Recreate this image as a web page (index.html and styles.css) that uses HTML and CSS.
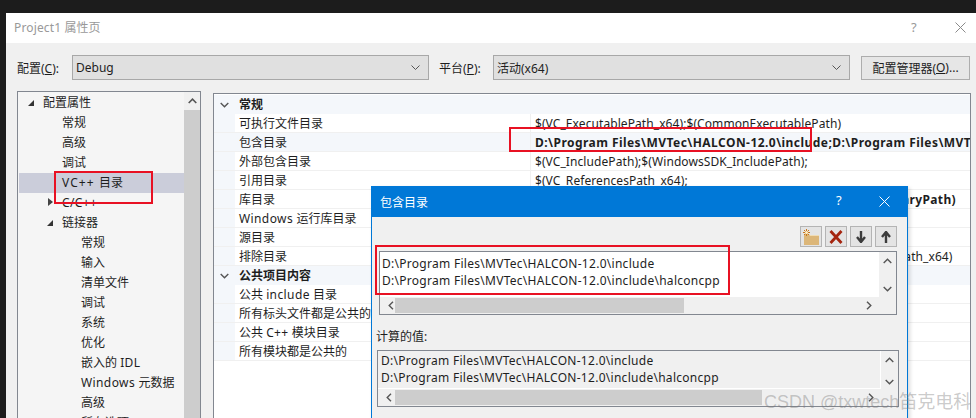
FILE: index.html
```html
<!DOCTYPE html>
<html lang="zh-CN">
<head>
<meta charset="utf-8">
<title>Project1 属性页</title>
<link rel="stylesheet" href="styles.css">
</head>
<body>
<div class="screen">
<div class="window">
  <div class="titlebar">
    <span class="title"><span class="en-title">Project1</span> 属性页</span>
    <span class="help">?</span>
    <svg class="close" width="11" height="11" viewBox="0 0 11 11"><path d="M.5.5l10 10M10.500.5l-10 10" stroke="#8a8a8a" fill="none"/></svg>
  </div>
  <div class="config">
    <label class="lbl lbl-cfg">配置(<u>C</u>):</label>
    <div class="select sel-cfg"><span>Debug</span><svg width="9" height="5" viewBox="0 0 9 5"><path d="M.5.5l4 4 4-4" stroke="#555" fill="none"/></svg></div>
    <label class="lbl lbl-plat">平台(<u>P</u>):</label>
    <div class="select sel-plat"><span>活动(x64)</span><svg width="9" height="5" viewBox="0 0 9 5"><path d="M.5.5l4 4 4-4" stroke="#555" fill="none"/></svg></div>
    <div class="mgr">配置管理器(<u>O</u>)...</div>
  </div>
  <div class="panels">
    <div class="tree">
      <div class="tree-list">
        <div class="node l0"><i class="tri"></i>配置属性</div>
        <div class="node l1">常规</div>
        <div class="node l1">高级</div>
        <div class="node l1">调试</div>
        <div class="node l1 sel"><span class="en-vc">VC++ </span>目录</div>
        <div class="node l1"><i class="tri-open"></i><span class="en">C/C++</span></div>
        <div class="node l1"><i class="tri"></i>链接器</div>
        <div class="node l2">常规</div>
        <div class="node l2">输入</div>
        <div class="node l2">清单文件</div>
        <div class="node l2">调试</div>
        <div class="node l2">系统</div>
        <div class="node l2">优化</div>
        <div class="node l2"><span>嵌入的 </span><span class="en">IDL</span></div>
        <div class="node l2"><span class="en">Windows </span>元数据</div>
        <div class="node l2">高级</div>
        <div class="node l2">所有选项</div>
      </div>
      <div class="tree-scroll">
        <div class="tree-up"><svg width="9" height="6" viewBox="0 0 9 6"><path d="M.7 5l3.800-3.800L8.300 5" stroke="#555" stroke-width="1.600" fill="none"/></svg></div>
        <div class="tree-thumb"></div>
      </div>
    </div>
    <div class="grid">
      <div class="row head"><div class="gut"><svg width="9" height="6" viewBox="0 0 9 6"><path d="M.7 1l3.800 3.800L8.300 1" stroke="#555" stroke-width="1.400" fill="none"/></svg></div><div class="head-name">常规</div></div>
      <div class="row"><div class="gut"></div><div class="name">可执行文件目录</div><div class="val">$(VC_ExecutablePath_x64);$(CommonExecutablePath)</div></div>
      <div class="row alt"><div class="gut"></div><div class="name">包含目录</div><div class="val strong">D:\Program Files\MVTec\HALCON-12.0\include;D:\Program Files\MVTec\HALCON-12.0\include\halconcpp</div></div>
      <div class="row"><div class="gut"></div><div class="name">外部包含目录</div><div class="val">$(VC_IncludePath);$(WindowsSDK_IncludePath);</div></div>
      <div class="row"><div class="gut"></div><div class="name">引用目录</div><div class="val">$(VC_ReferencesPath_x64);</div></div>
      <div class="row"><div class="gut"></div><div class="name">库目录</div><div class="val strong lib">D:\Program Files\MVTec\HALCON-12.0\lib\x64-win64;$(LibraryPath)</div></div>
      <div class="row"><div class="gut"></div><div class="name"><span class="en">Windows </span>运行库目录</div><div class="val">$(WindowsSDK_MetadataPath);</div></div>
      <div class="row"><div class="gut"></div><div class="name">源目录</div><div class="val">$(VC_SourcePath);</div></div>
      <div class="row"><div class="gut"></div><div class="name">排除目录</div><div class="val">$(CommonExcludePath);$(VC_ExecutablePath_x64);$(VC_LibraryPath_x64)</div></div>
      <div class="row head"><div class="gut"><svg width="9" height="6" viewBox="0 0 9 6"><path d="M.7 1l3.800 3.800L8.300 1" stroke="#555" stroke-width="1.400" fill="none"/></svg></div><div class="head-name">公共项目内容</div></div>
      <div class="row"><div class="gut"></div><div class="name">公共 <span class="en">include</span> 目录</div><div class="val"></div></div>
      <div class="row"><div class="gut"></div><div class="name">所有标头文件都是公共的</div><div class="val"></div></div>
      <div class="row"><div class="gut"></div><div class="name">公共 <span class="en">C++</span> 模块目录</div><div class="val"></div></div>
      <div class="row"><div class="gut"></div><div class="name">所有模块都是公共的</div><div class="val"></div></div>
    </div>
  </div>

  <div class="dialog">
    <div class="dlg-title">
      <span class="dlg-name">包含目录</span>
      <span class="dlg-help">?</span>
      <svg class="dlg-close" width="11" height="11" viewBox="0 0 11 11"><path d="M.5.5l10 10M10.500.5l-10 10" stroke="#fff" fill="none"/></svg>
    </div>
    <div class="dlg-tools">
      <div class="tool"><svg width="18" height="16" viewBox="0 0 18 16"><path d="M2 5h5l1 2h9v9H2z" fill="#dcb678"/><path d="M8 6.500h9" stroke="#f0dcb4"/><path d="M4.500 0v7M1 3.500h7M2 1l5 5M7 1L2 6" stroke="#c9751a"/><circle cx="4.500" cy="3.500" r="1.500" fill="#fff3c8"/></svg></div>
      <div class="tool"><svg width="14" height="14" viewBox="0 0 14 14"><path d="M1.500 1l11 12M12.500 1l-11 12" stroke="#a5250f" stroke-width="2.800" fill="none"/></svg></div>
      <div class="tool"><svg width="10" height="12" viewBox="0 0 10 12"><path d="M5 0v10M1 6l4 5 4-5" stroke="#3c3c3c" stroke-width="2.400" fill="none"/></svg></div>
      <div class="tool"><svg width="10" height="12" viewBox="0 0 10 12"><path d="M5 12V2M1 6l4-5 4 5" stroke="#3c3c3c" stroke-width="2.400" fill="none"/></svg></div>
    </div>
    <div class="list list-edit">
      <div class="list-main">
        <div class="list-text">
          <div>D:\Program Files\MVTec\HALCON-12.0\include</div>
          <div>D:\Program Files\MVTec\HALCON-12.0\include\halconcpp</div>
        </div>
        <div class="vbar"><svg width="9" height="6" viewBox="0 0 9 6"><path d="M.7 5l3.800-3.800L8.300 5" stroke="#555" stroke-width="1.400" fill="none"/></svg><svg width="9" height="6" viewBox="0 0 9 6"><path d="M.7 1l3.800 3.800L8.300 1" stroke="#555" stroke-width="1.400" fill="none"/></svg></div>
      </div>
      <div class="hbar">
        <svg width="6" height="9" viewBox="0 0 6 9"><path d="M5 .7L1.200 4.500 5 8.300" stroke="#555" stroke-width="1.400" fill="none"/></svg>
        <div class="hthumb th-edit"></div>
        <svg class="right-arrow" width="6" height="9" viewBox="0 0 6 9"><path d="M1 .7l3.800 3.800L1 8.300" stroke="#555" stroke-width="1.400" fill="none"/></svg>
      </div>
    </div>
    <div class="calc-label">计算的值:</div>
    <div class="list list-calc">
      <div class="list-main">
        <div class="list-text">
          <div>D:\Program Files\MVTec\HALCON-12.0\include</div>
          <div>D:\Program Files\MVTec\HALCON-12.0\include\halconcpp</div>
        </div>
        <div class="vbar"><svg width="9" height="6" viewBox="0 0 9 6"><path d="M.7 5l3.800-3.800L8.300 5" stroke="#555" stroke-width="1.400" fill="none"/></svg><svg width="9" height="6" viewBox="0 0 9 6"><path d="M.7 1l3.800 3.800L8.300 1" stroke="#555" stroke-width="1.400" fill="none"/></svg></div>
      </div>
      <div class="hbar">
        <svg width="6" height="9" viewBox="0 0 6 9"><path d="M5 .7L1.200 4.500 5 8.300" stroke="#555" stroke-width="1.400" fill="none"/></svg>
        <div class="hthumb th-calc"></div>
        <svg class="right-arrow" width="6" height="9" viewBox="0 0 6 9"><path d="M1 .7l3.800 3.800L1 8.300" stroke="#555" stroke-width="1.400" fill="none"/></svg>
      </div>
    </div>
  </div>

  <div class="redbox rb-tree"></div>
  <div class="redbox rb-val"></div>
  <div class="redbox rb-list"></div>
  <div class="watermark">CSDN @txwtech笛克电科</div>
</div>
</div>
</body>
</html>
```

FILE: styles.css
```css
* { box-sizing: border-box; }
html, body { margin: 0; padding: 0; }
body {
  width: 976px; height: 418px; overflow: hidden;
  font-family: "Noto Sans", "Noto Sans CJK SC", sans-serif;
  font-size: 12px; color: #1e1e1e;
}
.en { letter-spacing: .4px; }
.en-vc { letter-spacing: 1.1px; }
.en-title { letter-spacing: .15px; }
.screen { height: 418px; background: #1c1c1c; padding: 13px 0 0 6px; overflow: hidden; }
.window { position: relative; height: 405px; background: #f0f0f0; overflow: hidden; }

.titlebar { height: 30px; background: #fff; display: flex; align-items: center; padding: 0 0 2px 8px; }
.title { font-size: 12px; color: #999; }
.help { position: absolute; left: 905px; top: 5px; font-size: 13px; color: #999; }
.close { position: absolute; left: 949px; top: 9px; }

.config { display: flex; align-items: center; height: 25px; margin-top: 12px; padding-left: 11px; }
.lbl { width: 55px; }
.lbl-plat { width: 54px; margin-left: 10px; }
.select {
  height: 25px; background: #e0e0e0; border: 1px solid #a8a8a8;
  display: flex; align-items: center; justify-content: space-between;
  padding: 0 8px 0 3px; width: 357px;
}
.mgr {
  width: 109px; height: 24px; margin-left: 11px; background: #e6e6e6;
  border: 1px solid #adadad; display: flex; align-items: center; justify-content: center;
}

.panels { display: flex; align-items: flex-start; margin-top: 11px; padding-left: 11px; }
.tree {
  width: 184px; height: 340px; display: flex; background: #f5f5f5;
  border: 1px solid #828790; border-bottom: 0; padding-left: 1px;
}
.tree-list { width: 165px; padding-top: 1px; }
.node { height: 20px; line-height: 20px; position: relative; white-space: nowrap; }
.l0 { padding-left: 24px; }
.l1 { padding-left: 43px; }
.l2 { padding-left: 62px; }
.sel { background: #cbcdda; }
.tri {
  position: absolute; top: 7px; width: 0; height: 0;
  border-left: 6px solid transparent; border-bottom: 6px solid #333;
}
.l0 .tri { left: 9px; }
.l1 .tri { left: 28px; }
.tri-open {
  position: absolute; left: 29px; top: 5px; width: 0; height: 0;
  border-left: 5px solid #444; border-top: 4px solid transparent; border-bottom: 4px solid transparent;
}
.tree-scroll { width: 16px; display: flex; flex-direction: column; }
.tree-up { height: 18px; background: #f0f0f0; display: flex; align-items: center; justify-content: center; }
.tree-thumb { flex: 1; background: #cdcdcd; }

.grid { width: 758px; height: 338px; margin: 2px 0 0 12px; background: #fff; border: 1px solid #828790; border-bottom: 0; padding-top: 1px; }
.row { display: flex; height: 19px; line-height: 20px; border-bottom: 1px solid #f0f0f0; white-space: nowrap; overflow: hidden; }
.gut { width: 21px; flex: none; background: #f4f7fb; display: flex; align-items: center; justify-content: center; }
.head { background: #f4f7fb; font-weight: 700; border-bottom: 0; }
.head-name { padding-left: 4px; }
.name { width: 296px; flex: none; padding-left: 4px; border-right: 1px solid #f0f0f0; }
.val { padding-left: 4px; letter-spacing: .08px; }
.strong { font-weight: 700; letter-spacing: .45px; }
.lib { letter-spacing: .35px; }
.alt { background: #f4f7fb; }

.dialog {
  position: absolute; left: 365px; top: 173px; width: 537px; height: 240px;
  background: #f0f0f0; border: 1px solid #0078d7; border-top: 0;
  box-shadow: 2px 2px 4px rgba(0,0,0,.15);
}
.dlg-title { height: 31px; margin: 0 -1px; background: #0078d7; color: #fff; display: flex; align-items: center; padding-left: 9px; position: relative; }
.dlg-help { position: absolute; left: 465px; top: 5px; font-size: 13px; }
.dlg-close { position: absolute; left: 508px; top: 10px; }
.dlg-tools { display: flex; justify-content: flex-end; gap: 3px; margin-top: 9px; padding-right: 10px; }
.tool { width: 22px; height: 21px; background: #e4e4e4; border: 1px solid #b4b4b4; display: flex; align-items: center; justify-content: center; }
.list { border: 1px solid #828790; }
.list-main { display: flex; }
.list-text { flex: 1; line-height: 17px; letter-spacing: .28px; white-space: nowrap; }
.vbar { width: 17px; display: flex; flex-direction: column; align-items: center; justify-content: space-between; }
.hbar { display: flex; align-items: center; height: 16px; padding-left: 8px; }
.hthumb { height: 15px; }
.right-arrow { margin-left: auto; margin-right: 24px; }
.list-edit { width: 518px; height: 64px; margin: 4px 0 0 7px; }
.list-edit .list-main { height: 45px; background: #fff; }
.list-edit .list-text { padding: 3px 0 0 2px; }
.list-edit .vbar { padding: 6px 0 5px; background: #f0f0f0; }
.th-edit { width: 289px; margin-left: 1px; background: #cdcdcd; }
.calc-label { margin: 14px 0 0 4px; line-height: 16px; height: 16px; }
.list-calc { width: 522px; height: 57px; margin: 5px 0 0 5px; }
.list-calc .list-main { height: 38px; }
.list-calc .list-text { padding: 1px 0 0 3px; border-bottom: 1px solid #fff; border-right: 1px solid #fff; }
.list-calc .vbar { padding: 6px 0 4px; }
.th-calc { width: 367px; margin-left: 3px; background: #cdcdcd; }

.redbox { position: absolute; border: 2px solid #e81123; pointer-events: none; }
.rb-tree { left: 48px; top: 158px; width: 99px; height: 33px; }
.rb-val { left: 503px; top: 114px; width: 303px; height: 25px; }
.rb-list { left: 369px; top: 232px; width: 355px; height: 50px; }

.watermark {
  position: absolute; left: 758px; top: 374px; font-size: 18px; white-space: nowrap;
  color: rgba(120,120,120,.4); font-family: "Liberation Sans", "Noto Sans CJK SC", sans-serif;
}
```
